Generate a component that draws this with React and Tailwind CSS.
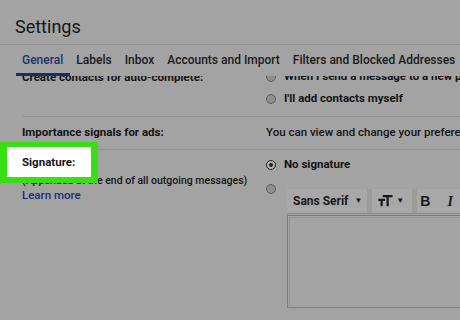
export default function App() {

  // RADIO DOT
  const Radio = ({ checked }) => (
    <span
      className={
        checked
          ? "flex items-center justify-center w-[10px] h-[10px] rounded-full border-[1.5px] border-[#1e1e1e] bg-[#b4b4b4] shrink-0"
          : "w-[10px] h-[10px] rounded-full border border-[#5c5c5c] bg-[#8e8e8e] shrink-0"
      }
    >
      {checked && (
        <span className="w-[4px] h-[4px] rounded-full bg-[#1e1e1e]" />
      )}
    </span>
  );

  const tabs = [
    "General",
    "Labels",
    "Inbox",
    "Accounts and Import",
    "Filters and Blocked Addresses",
  ];

  return (
    <div className="relative w-[460px] h-[320px] overflow-hidden bg-[#a3a3a3] text-[#141414] font-['Roboto','Liberation_Sans',sans-serif]">

      {/* HEADER */}
      <div className="h-[45px] border-b border-[#8e8e8e] pl-[15px] pt-[16px]">
        <h1 className="text-[18px] leading-[22px] text-[#161616]">
          Settings
        </h1>
      </div>

      {/* TABS */}
      <div className="flex h-[31px] pl-[15.5px] text-[12px] font-medium whitespace-nowrap">
        {tabs.map((tab, i) => (
          <div
            key={tab}
            className={
              i === 0
                ? "px-[6.5px] pt-[7px] leading-[16px] text-[#22306e] border-b-[3px] border-[#1f2b66]"
                : "px-[6.5px] pt-[7px] leading-[16px] text-[#1a1a1a]"
            }
          >
            {tab}
          </div>
        ))}
      </div>

      {/* CONTENT */}
      <div className="h-[244px] overflow-hidden">
        <div className="-mt-[7px] text-[11.5px] whitespace-nowrap">

          {/* CONTACTS */}
          <div className="ml-[22px] grid grid-cols-[244px_1fr] border-b border-[#959595] pb-[9px]">
            <p className="leading-[16px] font-bold">
              Create contacts for auto-complete:
            </p>
            <div className="flex flex-col gap-[6px] overflow-hidden">
              <div className="flex items-center gap-[8px] h-[16px]">
                <Radio />
                <span className="font-bold">
                  When I send a message to a new person, add them to Other Contacts
                </span>
              </div>
              <div className="flex items-center gap-[8px] h-[16px]">
                <Radio />
                <span className="font-bold">I'll add contacts myself</span>
              </div>
            </div>
          </div>

          {/* ADS */}
          <div className="ml-[22px] grid grid-cols-[244px_1fr] border-b border-[#959595] pt-[7px] pb-[9px]">
            <p className="leading-[16px] font-bold">
              Importance signals for ads:
            </p>
            <p className="leading-[16px] font-medium overflow-hidden">
              You can view and change your preferences here.
            </p>
          </div>

          {/* SIGNATURE */}
          <div className="ml-[22px] grid grid-cols-[244px_1fr]">
            <div className="pt-[5px]">
              <p className="leading-[16px] font-bold">Signature:</p>
              <p className="mt-[3px] text-[10.5px] leading-[14px] font-medium">
                (Appended at the end of all outgoing messages)
              </p>
              <p className="text-[11.5px] leading-[14px] font-medium text-[#1c2a78]">
                Learn more
              </p>
            </div>

            <div className="pt-[7px]">
              <div className="flex items-center gap-[8px] h-[16px]">
                <Radio checked />
                <span className="font-bold">No signature</span>
              </div>

              <div className="flex mt-[11px]">
                <Radio />
                <div className="ml-[11px] mt-[5px]">

                  {/* TOOLBAR */}
                  <div className="flex items-center h-[25px] w-[190px] bg-[#a8a8a8] border-b border-[#868686] pl-[6px] font-bold text-[#1a1a1a]">
                    <span className="text-[12px]">Sans Serif</span>
                    <span className="ml-[6px] text-[8px]">▼</span>
                    <span className="ml-[5px] w-[5px] h-full bg-[#9c9c9c]" />
                    <svg
                      className="ml-[4px]"
                      width="18"
                      height="18"
                      viewBox="0 0 24 24"
                      fill="#1a1a1a"
                    >
                      <path d="M9 4v3h5v12h3V7h5V4H9zm-6 8h3v7h3v-7h3V9H3v3z" />
                    </svg>
                    <span className="ml-[2px] text-[8px]">▼</span>
                    <span className="ml-[8px] w-[5px] h-full bg-[#9c9c9c]" />
                    <span className="ml-[3px] text-[14px] font-['Liberation_Sans',sans-serif] font-bold">
                      B
                    </span>
                    <span className="ml-[17px] text-[14px] font-['Liberation_Serif',serif] font-bold italic">
                      I
                    </span>
                  </div>

                  {/* EDITOR */}
                  <div className="mt-[1px] w-[190px] h-[93px] border border-[#7b7b7b] p-[1px]">
                    <div className="h-full border-l border-t border-[#979797]" />
                  </div>

                </div>
              </div>
            </div>
          </div>

        </div>
      </div>

      {/* HIGHLIGHT */}
      <div className="absolute left-0 top-[142px] w-[98px] h-[41px] border-x-[7px] border-t-[5px] border-b-[6px] border-[#37df14] bg-white flex items-center pl-[15px]">
        <span className="text-[11.5px] font-bold leading-[16px]">Signature:</span>
      </div>

    </div>
  );
}
